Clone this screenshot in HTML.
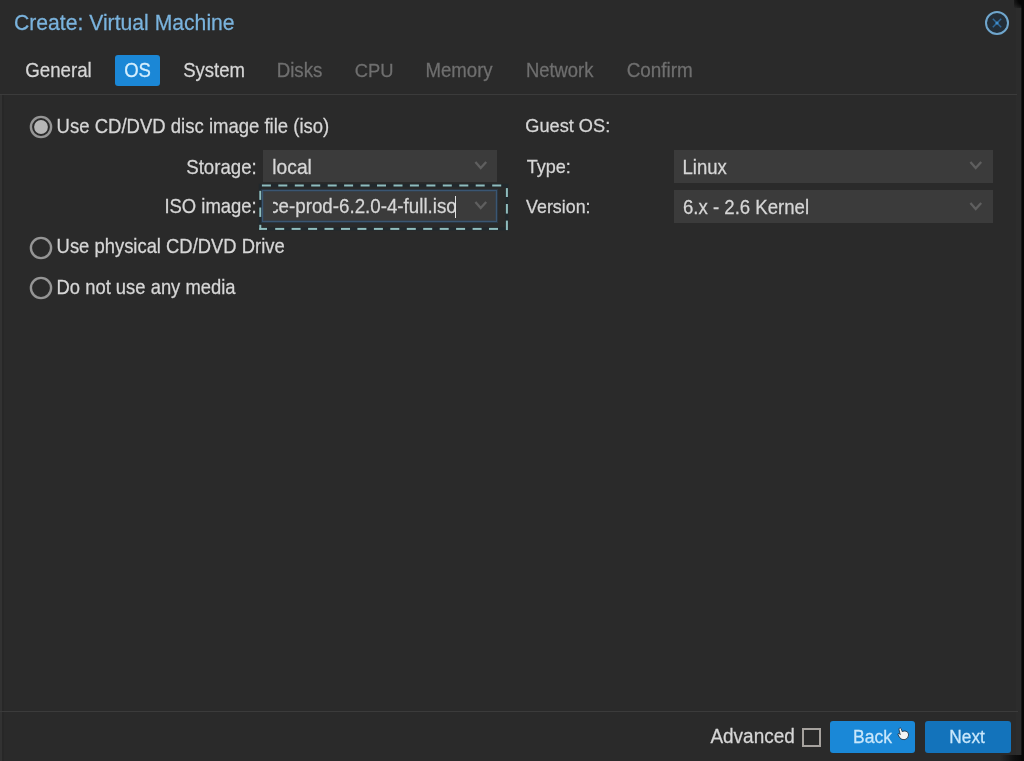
<!DOCTYPE html>
<html><head><meta charset="utf-8">
<style>
html,body{margin:0;padding:0;}
body{width:1024px;height:761px;overflow:hidden;background:#2a2a2a;position:relative;font-family:"Liberation Sans",sans-serif;filter:blur(0.45px);}
.a{position:absolute;white-space:nowrap;line-height:1;transform:scaleY(1.05);-webkit-text-stroke:0.25px currentColor;}
.p{position:absolute;}
.field{position:absolute;background:#3b3b3b;}
.radio{position:absolute;width:18.5px;height:18.5px;border:2px solid #939393;border-radius:50%;box-sizing:content-box;}
</style></head><body>
<!-- window edges -->
<div class="p" style="left:0;top:95px;width:2px;height:666px;background:#323232"></div>
<div class="p" style="left:2px;top:95px;width:2px;height:666px;background:#272727"></div>
<div class="p" style="left:1016px;top:0;width:5px;height:761px;background:#2c2c2c"></div>
<div class="p" style="left:1021px;top:0;width:1px;height:761px;background:#151515"></div>
<div class="p" style="left:1022px;top:0;width:2px;height:761px;background:#060606"></div>
<div class="p" style="left:1014px;top:0;width:10px;height:8px;background:radial-gradient(ellipse at 100% 0%,#060606 40%,rgba(6,6,6,0) 100%)"></div>
<div class="p" style="left:1000px;top:755px;width:24px;height:6px;background:linear-gradient(to right,rgba(10,10,10,0),rgba(10,10,10,0.8) 60%,#060606)"></div>

<div class="a" style="left:13.94px;top:11.52px;font-size:21.161px;color:#7ab3dd;transform-origin:0 17.88px;transform:scaleY(1.06);">Create: Virtual Machine</div>
<!-- close icon -->
<svg class="p" style="left:984px;top:9.6px" width="26" height="26" viewBox="0 0 26 26">
<circle cx="13" cy="13" r="11" fill="#232e38" stroke="#6fa6cd" stroke-width="2"/>
<path d="M8.8 8.8 L17.2 17.2 M17.2 8.8 L8.8 17.2" stroke="#2f6797" stroke-width="1.5"/>
<circle cx="13" cy="13" r="1.6" fill="#3f8fcf"/>
</svg>
<!-- tabs -->
<div class="a" style="left:25.16px;top:62.48px;font-size:18.721px;color:#d6d6d6;transform-origin:0 15.82px;">General</div>
<div class="p" style="left:115.2px;top:54.5px;width:45px;height:31.3px;background:#1b87d6;border-radius:3px"></div>
<div class="a" style="left:124.17px;top:61.65px;font-size:18.524px;color:#d5eefd;transform-origin:0 15.65px;">OS</div>
<div class="a" style="left:183.17px;top:61.63px;font-size:18.543px;color:#d6d6d6;transform-origin:0 15.67px;">System</div>
<div class="a" style="left:276.70px;top:62.49px;font-size:18.712px;color:#6f6f6f;transform-origin:0 15.81px;">Disks</div>
<div class="a" style="left:354.78px;top:61.80px;font-size:18.338px;color:#6f6f6f;transform-origin:0 15.50px;">CPU</div>
<div class="a" style="left:425.41px;top:61.55px;font-size:18.640px;color:#6f6f6f;transform-origin:0 15.75px;">Memory</div>
<div class="a" style="left:525.93px;top:61.74px;font-size:18.412px;color:#6f6f6f;transform-origin:0 15.56px;">Network</div>
<div class="a" style="left:626.65px;top:62.30px;font-size:18.936px;color:#6f6f6f;transform-origin:0 16.00px;">Confirm</div>
<div class="p" style="left:0;top:94px;width:1017px;height:1px;background:#3b3b3b"></div>

<!-- left column -->
<svg class="p" style="left:27.6px;top:113.8px" width="26" height="26" viewBox="0 0 26 26"><circle cx="13" cy="13" r="10.1" fill="none" stroke="#959595" stroke-width="2.4"/><circle cx="13" cy="13" r="6.9" fill="#b6b6b6"/></svg>
<div class="a" style="left:56.61px;top:118.35px;font-size:18.520px;color:#d6d6d6;transform-origin:0 15.65px;">Use CD/DVD disc image file (iso)</div>

<div class="a" style="left:186.26px;top:159.14px;font-size:18.656px;color:#d6d6d6;transform-origin:0 15.76px;">Storage:</div>
<div class="field" style="left:263px;top:150px;width:234.4px;height:31.5px;"></div>
<div class="a" style="left:272.25px;top:157.71px;font-size:19.273px;color:#d6d6d6;transform-origin:0 16.29px;">local</div>
<svg class="p" style="left:474px;top:160px" width="14" height="11" viewBox="0 0 14 11"><path d="M1.4 2.0 L6.7 8.0 L12.2 2.0" fill="none" stroke="#5f5f5f" stroke-width="2.3"/></svg>

<div class="a" style="left:164.44px;top:197.60px;font-size:18.465px;color:#d6d6d6;transform-origin:0 15.60px;">ISO image:</div>
<svg class="p" style="left:0;top:0" width="1024" height="761">
<rect x="260.3" y="185.5" width="246.6" height="43.4" fill="none" stroke="#21282c" stroke-width="3.2"/>
<rect x="261.9" y="184.5" width="9.0" height="2" fill="#8fbcbd"/>
<rect x="278.3" y="184.5" width="9.0" height="2" fill="#8fbcbd"/>
<rect x="294.8" y="184.5" width="9.0" height="2" fill="#8fbcbd"/>
<rect x="311.2" y="184.5" width="9.0" height="2" fill="#8fbcbd"/>
<rect x="327.7" y="184.5" width="9.0" height="2" fill="#8fbcbd"/>
<rect x="344.1" y="184.5" width="9.0" height="2" fill="#8fbcbd"/>
<rect x="360.6" y="184.5" width="9.0" height="2" fill="#8fbcbd"/>
<rect x="377.0" y="184.5" width="9.0" height="2" fill="#8fbcbd"/>
<rect x="393.5" y="184.5" width="9.0" height="2" fill="#8fbcbd"/>
<rect x="409.9" y="184.5" width="9.0" height="2" fill="#8fbcbd"/>
<rect x="426.4" y="184.5" width="9.0" height="2" fill="#8fbcbd"/>
<rect x="442.8" y="184.5" width="9.0" height="2" fill="#8fbcbd"/>
<rect x="459.3" y="184.5" width="9.0" height="2" fill="#8fbcbd"/>
<rect x="475.7" y="184.5" width="9.0" height="2" fill="#8fbcbd"/>
<rect x="492.2" y="184.5" width="9.0" height="2" fill="#8fbcbd"/>
<rect x="259.3" y="227.9" width="7.7" height="2" fill="#8fbcbd"/>
<rect x="275.2" y="227.9" width="9.0" height="2" fill="#8fbcbd"/>
<rect x="291.6" y="227.9" width="9.0" height="2" fill="#8fbcbd"/>
<rect x="308.1" y="227.9" width="9.0" height="2" fill="#8fbcbd"/>
<rect x="324.5" y="227.9" width="9.0" height="2" fill="#8fbcbd"/>
<rect x="341.0" y="227.9" width="9.0" height="2" fill="#8fbcbd"/>
<rect x="357.4" y="227.9" width="9.0" height="2" fill="#8fbcbd"/>
<rect x="373.9" y="227.9" width="9.0" height="2" fill="#8fbcbd"/>
<rect x="390.3" y="227.9" width="9.0" height="2" fill="#8fbcbd"/>
<rect x="406.8" y="227.9" width="9.0" height="2" fill="#8fbcbd"/>
<rect x="423.2" y="227.9" width="9.0" height="2" fill="#8fbcbd"/>
<rect x="439.7" y="227.9" width="9.0" height="2" fill="#8fbcbd"/>
<rect x="456.1" y="227.9" width="9.0" height="2" fill="#8fbcbd"/>
<rect x="472.6" y="227.9" width="9.0" height="2" fill="#8fbcbd"/>
<rect x="489.0" y="227.9" width="9.0" height="2" fill="#8fbcbd"/>
<rect x="259.3" y="190.8" width="2" height="9.1" fill="#8fbcbd"/>
<rect x="259.3" y="207.5" width="2" height="9.4" fill="#8fbcbd"/>
<rect x="259.3" y="224.8" width="2" height="5.1" fill="#8fbcbd"/>
<rect x="505.9" y="188.1" width="2" height="8.9" fill="#8fbcbd"/>
<rect x="505.9" y="204.0" width="2" height="9.6" fill="#8fbcbd"/>
<rect x="505.9" y="220.6" width="2" height="9.5" fill="#8fbcbd"/>
</svg>
<div class="field" style="left:262.3px;top:190.1px;width:235.1px;height:32.3px;border:1px solid #3a5673;box-sizing:border-box;box-shadow:0 0 0 1px rgba(45,70,95,0.45), inset 0 0 0 1px rgba(50,75,100,0.35)"></div>
<div class="p" style="left:272.5px;top:190px;width:183.5px;height:32px;overflow:hidden">
<div class="a" style="left:-3.34px;top:8.16px;font-size:18.75px;color:#d6d6d6;transform-origin:0 15.84px">ce-prod-6.2.0-4-full.iso</div>
</div>
<div class="p" style="left:455.2px;top:195.7px;width:1px;height:22px;background:#e2e2e2"></div>
<svg class="p" style="left:474px;top:199.6px" width="14" height="11" viewBox="0 0 14 11"><path d="M1.4 2.0 L6.7 8.0 L12.2 2.0" fill="none" stroke="#5f5f5f" stroke-width="2.3"/></svg>

<svg class="p" style="left:27.5px;top:234.5px" width="26" height="26" viewBox="0 0 26 26"><circle cx="13" cy="13" r="10.1" fill="none" stroke="#959595" stroke-width="2.4"/></svg>
<div class="a" style="left:56.62px;top:238.04px;font-size:18.411px;color:#d6d6d6;transform-origin:0 15.56px;">Use physical CD/DVD Drive</div>
<svg class="p" style="left:27.5px;top:275.3px" width="26" height="26" viewBox="0 0 26 26"><circle cx="13" cy="13" r="10.1" fill="none" stroke="#959595" stroke-width="2.4"/></svg>
<div class="a" style="left:56.53px;top:278.94px;font-size:18.415px;color:#d6d6d6;transform-origin:0 15.56px;">Do not use any media</div>

<!-- right column -->
<div class="a" style="left:525.29px;top:116.53px;font-size:18.190px;color:#d6d6d6;transform-origin:0 15.37px;">Guest OS:</div>
<div class="a" style="left:526.64px;top:157.93px;font-size:18.073px;color:#d6d6d6;transform-origin:0 15.27px;">Type:</div>
<div class="field" style="left:674.3px;top:150.1px;width:318.5px;height:33px;"></div>
<div class="a" style="left:682.52px;top:158.65px;font-size:18.522px;color:#d6d6d6;transform-origin:0 15.65px;">Linux</div>
<svg class="p" style="left:969px;top:160.4px" width="14" height="11" viewBox="0 0 14 11"><path d="M1.4 2.0 L6.7 8.0 L12.2 2.0" fill="none" stroke="#5f5f5f" stroke-width="2.3"/></svg>
<div class="a" style="left:526.11px;top:199.23px;font-size:17.838px;color:#d6d6d6;transform-origin:0 15.07px;">Version:</div>
<div class="field" style="left:674.3px;top:189.8px;width:318.5px;height:33.4px;"></div>
<div class="a" style="left:682.97px;top:199.18px;font-size:18.605px;color:#d6d6d6;transform-origin:0 15.72px;">6.x - 2.6 Kernel</div>
<svg class="p" style="left:969px;top:200.6px" width="14" height="11" viewBox="0 0 14 11"><path d="M1.4 2.0 L6.7 8.0 L12.2 2.0" fill="none" stroke="#5f5f5f" stroke-width="2.3"/></svg>

<!-- footer -->
<div class="p" style="left:0;top:711px;width:1018px;height:1px;background:#3b3b3b"></div>
<div class="a" style="left:710.41px;top:728.07px;font-size:18.973px;color:#d6d6d6;transform-origin:0 16.03px;">Advanced</div>
<div class="p" style="left:801.8px;top:727.9px;width:19px;height:19px;border:2px solid #a6a29e;box-sizing:border-box"></div>
<div class="p" style="left:830.4px;top:721px;width:85px;height:32.4px;background:#1a88d7;border-radius:3px"></div>
<div class="a" style="left:853.00px;top:728.59px;font-size:17.529px;color:#c9e7fb;transform-origin:0 14.81px;">Back</div>
<div class="p" style="left:925.2px;top:721px;width:85.4px;height:32.4px;background:#1373bb;border-radius:3px"></div>
<div class="a" style="left:949.32px;top:728.57px;font-size:17.310px;color:#c9e7fb;transform-origin:0 14.63px;">Next</div>
<svg class="p" style="left:895px;top:726px" width="16" height="16" viewBox="0 0 16 16">
<path d="M4.5 2.2 Q5.6 1.6 6.2 2.6 L7.2 5.6 Q9 4.6 11 5.2 Q13.8 6 13.6 9 Q13.4 12.6 10 13.6 Q6.6 14.2 4.6 11.6 L3 8.6 Q2.8 7.2 4.2 7.6 L5.2 8.6 L4 3.6 Q3.8 2.6 4.5 2.2 Z" fill="#f4f4f4" stroke="#1a2a3a" stroke-width="0.8"/>
</svg>
</body></html>
